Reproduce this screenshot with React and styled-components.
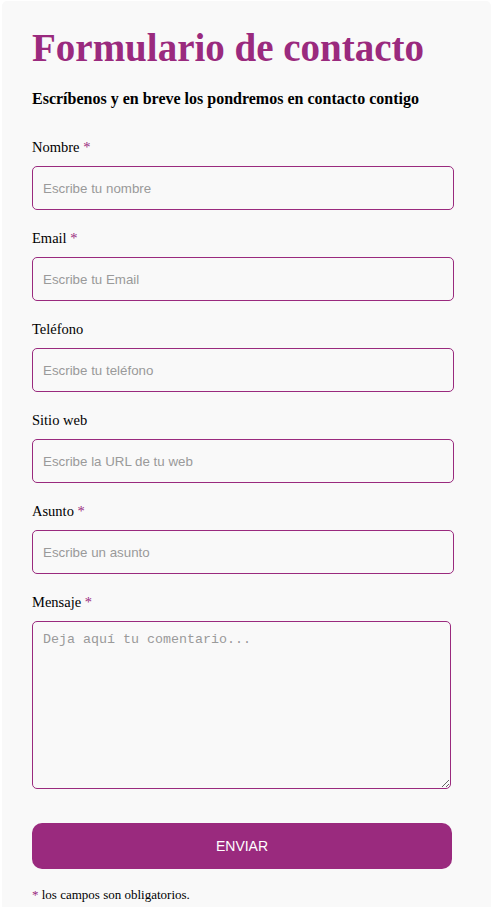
import React from "react";
import styled, { createGlobalStyle } from "styled-components";

const purple = "#9a2a7e";

const GlobalStyle = createGlobalStyle`
  html, body {
    margin: 0;
    padding: 0;
    background: #ffffff;
  }
  body {
    font-family: "Liberation Serif", "Times New Roman", serif;
    color: #000;
  }
`;

const Card = styled.section`
  margin: 1px 3px 0 2px;
  padding: 24px 30px 40px 30px;
  background: #f9f9f9;
  border-radius: 5px 5px 0 0;
  min-height: 900px;
  box-sizing: border-box;
`;

const Title = styled.h1`
  margin: 0;
  font-size: 39px;
  line-height: 46px;
  font-weight: bold;
  color: ${purple};
`;

const Subtitle = styled.h4`
  margin: 18px 0 29px 0;
  font-size: 16px;
  line-height: 20px;
  font-weight: bold;
`;

const Form = styled.form`
  display: flex;
  flex-direction: column;
  width: 422px;
`;

const Field = styled.div`
  display: flex;
  flex-direction: column;
  margin-bottom: 19px;
`;

const Label = styled.label`
  font-size: 14.5px;
  line-height: 18px;
  margin-bottom: 10px;
`;

const Required = styled.span`
  color: ${purple};
`;

const Input = styled.input`
  box-sizing: border-box;
  width: 100%;
  height: 44px;
  padding: 0 10px;
  border: 1px solid ${purple};
  border-radius: 5px;
  background: #f9f9f9;
  font-family: "Liberation Sans", Arial, sans-serif;
  font-size: 13.33px;
  outline: none;
  &::placeholder {
    color: #9a9a9a;
  }
`;

const TextArea = styled.textarea`
  box-sizing: border-box;
  width: 419px;
  height: 168px;
  padding: 10px 10px;
  border: 1px solid ${purple};
  border-radius: 5px;
  background: #f9f9f9;
  font-family: "Liberation Mono", "Courier New", monospace;
  font-size: 13.33px;
  line-height: 15px;
  outline: none;
  &::placeholder {
    color: #9a9a9a;
  }
`;

const Button = styled.button`
  box-sizing: border-box;
  width: 420px;
  height: 46px;
  margin-top: 15px;
  border: none;
  border-radius: 10px;
  background: ${purple};
  color: #ffffff;
  font-family: "Liberation Sans", Arial, sans-serif;
  font-size: 14px;
  cursor: pointer;
`;

const Note = styled.p`
  margin: 17px 0 0 0;
  font-size: 13px;
  line-height: 18px;
`;

const fields = [
  { id: "nombre", label: "Nombre", required: true, placeholder: "Escribe tu nombre" },
  { id: "email", label: "Email", required: true, placeholder: "Escribe tu Email" },
  { id: "telefono", label: "Teléfono", required: false, placeholder: "Escribe tu teléfono" },
  { id: "web", label: "Sitio web", required: false, placeholder: "Escribe la URL de tu web" },
  { id: "asunto", label: "Asunto", required: true, placeholder: "Escribe un asunto" },
];

const App = () => {
  return (
    <>
      <GlobalStyle />
      <Card>
        <Title>Formulario de contacto</Title>
        <Subtitle>Escríbenos y en breve los pondremos en contacto contigo</Subtitle>
        <Form onSubmit={(e) => e.preventDefault()}>
          {fields.map((f) => (
            <Field key={f.id}>
              <Label htmlFor={f.id}>
                {f.label} {f.required && <Required>*</Required>}
              </Label>
              <Input id={f.id} type="text" placeholder={f.placeholder} />
            </Field>
          ))}
          <Field>
            <Label htmlFor="mensaje">
              Mensaje <Required>*</Required>
            </Label>
            <TextArea id="mensaje" placeholder="Deja aquí tu comentario..." />
          </Field>
          <Button type="submit">ENVIAR</Button>
        </Form>
        <Note>
          <Required>*</Required> los campos son obligatorios.
        </Note>
      </Card>
    </>
  );
};

export default App;
